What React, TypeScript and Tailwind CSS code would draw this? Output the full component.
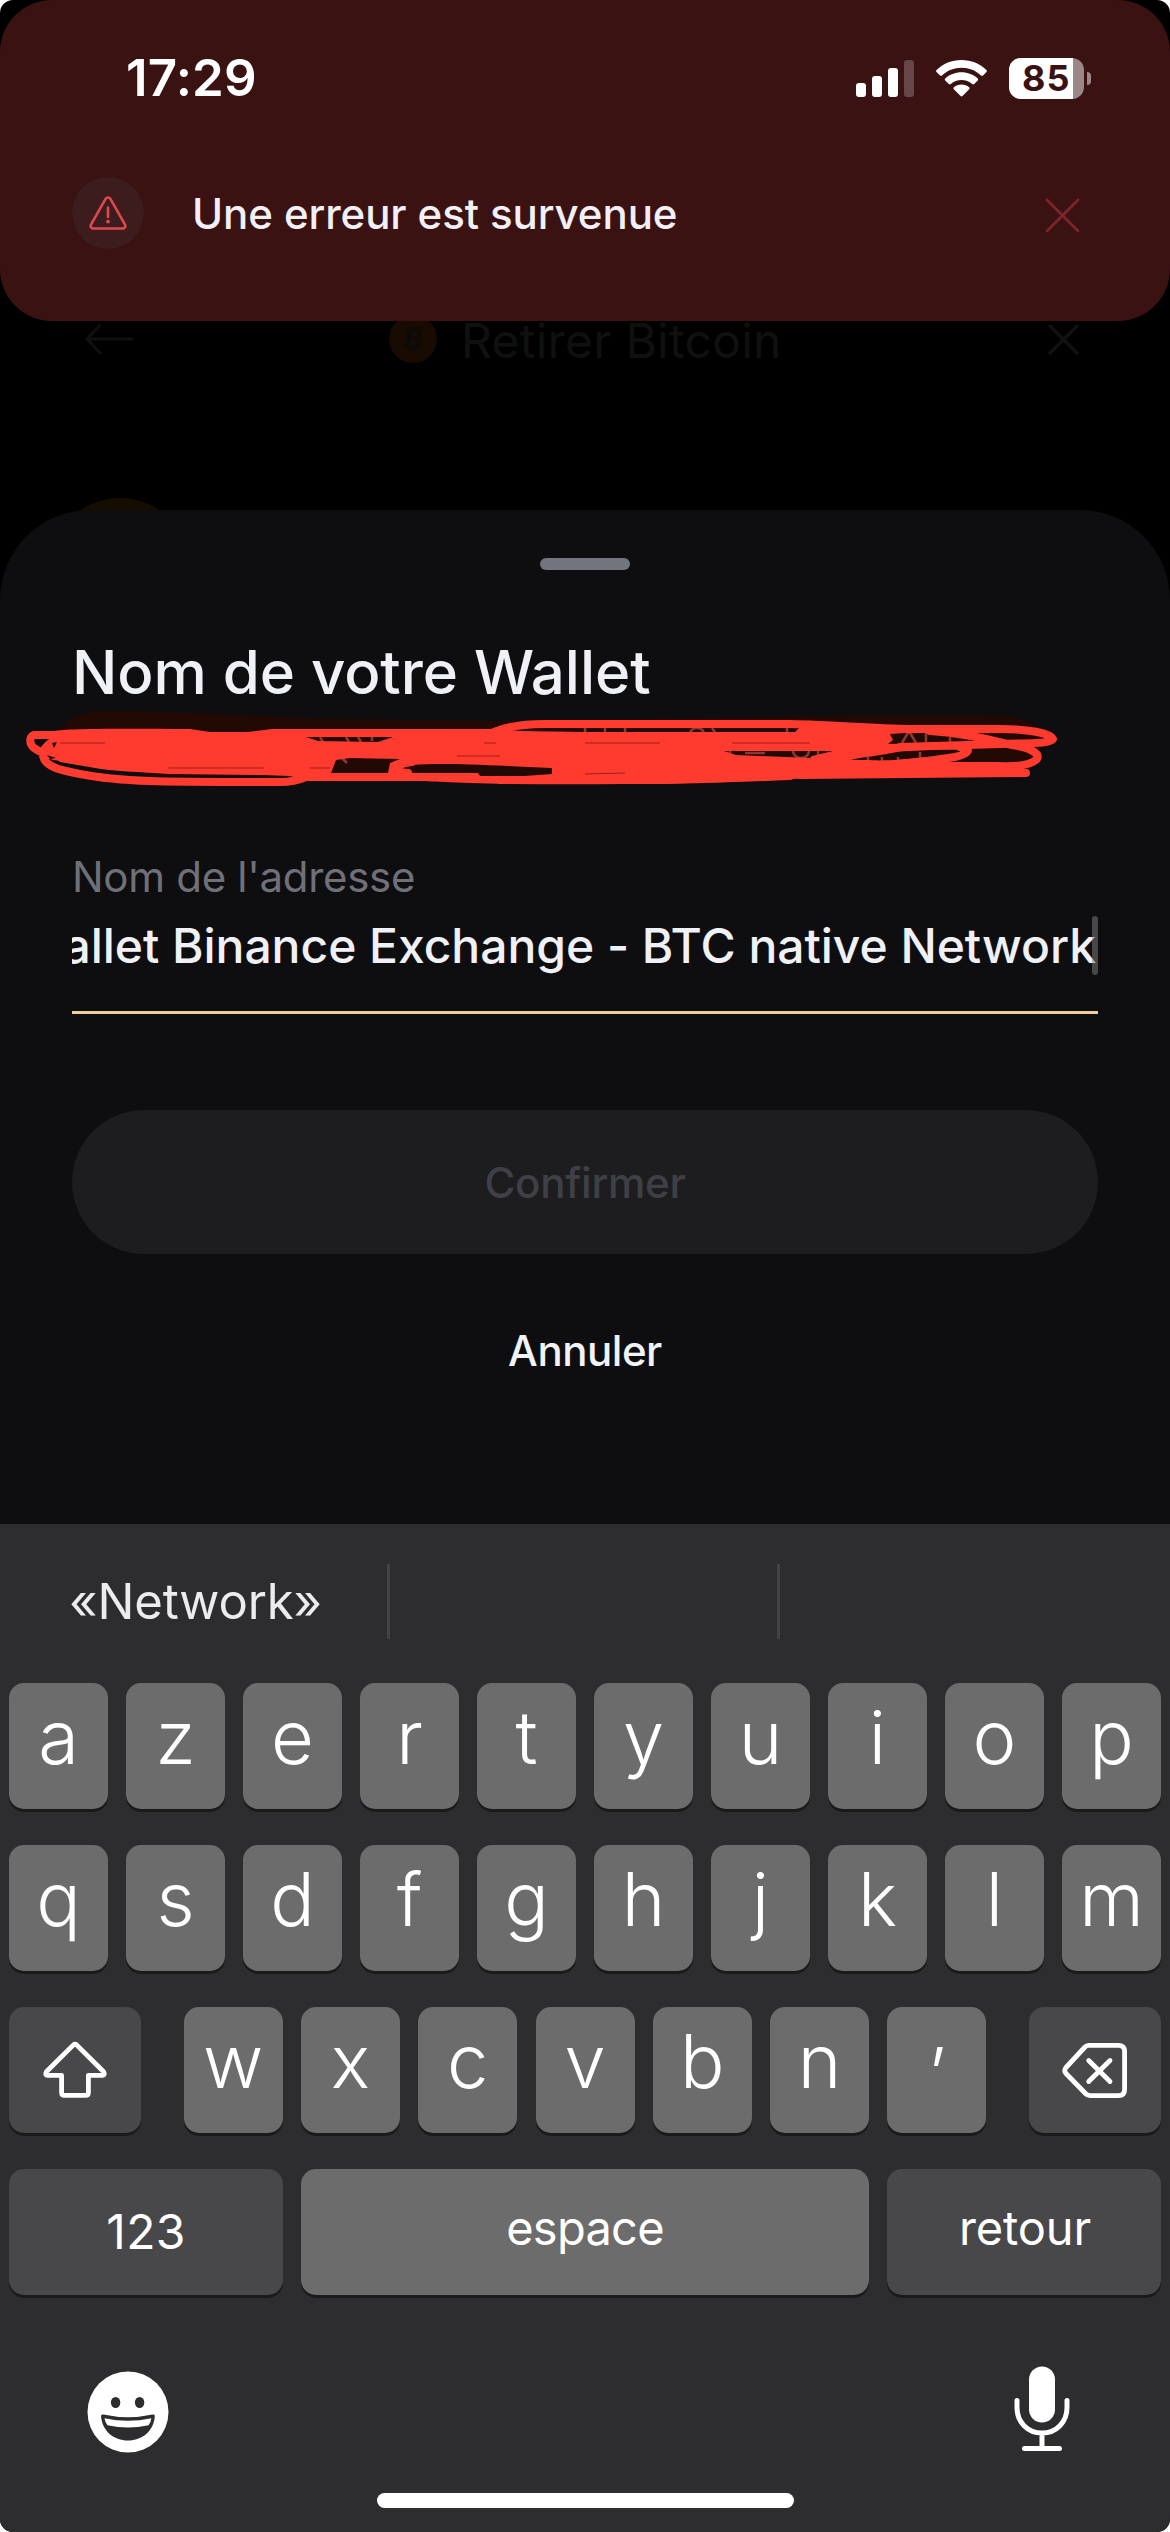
import React from "react";

function SignalIcon() {
  return (
    <svg width="58" height="37" viewBox="0 0 58 37" fill="#fff">
      <rect x="0" y="23" width="10" height="14" rx="3" />
      <rect x="16" y="16" width="10" height="21" rx="3" />
      <rect x="32" y="8" width="10" height="29" rx="3" />
      <rect x="48" y="0" width="10" height="37" rx="3" opacity="0.22" />
    </svg>
  );
}

function WifiIcon() {
  return (
    <svg width="51" height="37" viewBox="0 0 51 37" fill="#fff">
      <path d="M25.5 0C35.2 0 44 3.7 50.4 9.9c.6.6.6 1.4.1 2L47 15.4c-.6.6-1.4.6-2 0C39.8 10.500 33 7.700 25.500 7.700S11.200 10.500 6 15.400c-.6.6-1.400.6-2 0L.5 11.900c-.6-.6-.6-1.400.1-2C7 3.700 15.800 0 25.500 0Z" />
      <path d="M25.500 12.300c6.200 0 11.900 2.300 16.200 6.200.6.500.6 1.400.1 2l-3.600 3.500c-.5.6-1.400.6-2 .1-2.900-2.500-6.600-4-10.700-4s-7.800 1.500-10.700 4c-.6.5-1.400.5-2-.1L9.200 20.500c-.6-.6-.5-1.500.1-2 4.300-3.900 10-6.200 16.200-6.200Z" />
      <path d="M25.500 24.500c2.900 0 5.500 1 7.600 2.700.6.500.6 1.400.1 2l-6.700 6.900c-.6.600-1.400.6-2 0l-6.700-6.900c-.5-.6-.5-1.500.1-2 2.100-1.700 4.700-2.700 7.600-2.700Z" />
    </svg>
  );
}

function Battery() {
  return (
    <div className="flex items-center gap-[3px]">
      <div className="relative h-[41px] w-[75px] overflow-hidden rounded-[12px] bg-[#9b8788]">
        <div className="absolute inset-y-0 left-0 w-[64px] bg-white" />
        <div className="relative pl-[13px] text-[36px] font-bold leading-[41px] tracking-[1px] text-[#3b1212]">85</div>
      </div>
      <div className="h-[13px] w-[4px] rounded-r-full bg-[#9b8788]" />
    </div>
  );
}

function CrossIcon({ size, stroke, color }: { size: number; stroke: number; color: string }) {
  return (
    <svg width={size} height={size} viewBox={`0 0 ${size} ${size}`} fill="none" stroke={color} strokeWidth={stroke} strokeLinecap="round">
      <path d={`M2 2L${size - 2} ${size - 2}M${size - 2} 2L2 ${size - 2}`} />
    </svg>
  );
}

function ErrorBanner() {
  return (
    <div className="relative z-10 h-[321px] w-full rounded-[52px] bg-[#3b1212]">
      <div className="flex h-[156px] items-center justify-between pl-[126px] pr-[79px]">
        <div className="text-[51px] font-semibold leading-[60px] tracking-[0.2px] text-white">17:29</div>
        <div className="flex items-center">
          <SignalIcon />
          <div className="ml-[22px]">
            <WifiIcon />
          </div>
          <div className="ml-[22px]">
            <Battery />
          </div>
        </div>
      </div>
      <div className="flex h-[114px] items-center pl-[72px] pr-[90px]">
        <div className="flex size-[72px] items-center justify-center rounded-full bg-[#3c1c1c]">
          <svg width="38" height="34" viewBox="0 0 38 34" fill="none" stroke="#e0484f" strokeWidth="2.600" strokeLinecap="round" strokeLinejoin="round">
            <path d="M16.600 2.900a2.800 2.800 0 0 1 4.800 0L36 28.600a2.600 2.600 0 0 1-2.300 3.900H4.300A2.600 2.600 0 0 1 2 28.600Z" />
            <path d="M19 11.500v9.500" />
            <circle cx="19" cy="25.600" r="1.900" fill="#e0484f" stroke="none" />
          </svg>
        </div>
        <div className="ml-[48px] flex-1 pt-[2px] text-[42px] font-medium leading-[54px] tracking-[-0.08px] text-[#f1f0f6]">Une erreur est survenue</div>
        <div className="pt-[5px]">
          <CrossIcon size={35} stroke={2.8} color="#7d252b" />
        </div>
      </div>
    </div>
  );
}

function DimmedHeader() {
  return (
    <div className="-mt-[12px] flex h-[60px] items-center pl-[84px] pr-[91px]">
      <svg width="50" height="32" viewBox="0 0 50 32" fill="none" stroke="#0f1111" strokeWidth="3" strokeLinecap="round" strokeLinejoin="round">
        <path d="M48 16H3M16 2L3 16L16 30" />
      </svg>
      <div className="flex flex-1 items-center pl-[255px]">
        <div className="flex size-[48px] items-center justify-center rounded-full bg-[#170b02]">
          <span className="rotate-12 text-[28px] font-bold leading-none text-[#0d0a07]">₿</span>
        </div>
        <div className="ml-[24px] pt-[3px] text-[48px] leading-[56px] tracking-[0.26px] text-[#0f1111]">Retirer Bitcoin</div>
      </div>
      <CrossIcon size={31} stroke={3.4} color="#101212" />
    </div>
  );
}

function Scribble() {
  return (
    <svg className="block" width="1170" height="148" viewBox="0 702 1170 148" fill="none">
      <path d="M60 733C66 716 84 711 110 711C190 711 230 716 330 719L585 722C760 716 900 714 1008 716C1040 722 1050 732 1040 748L1020 768L500 778L150 776L62 750Z" fill="#230904" />
      <g stroke="#8a3a30" strokeWidth="2.500">
        <path d="M902 743L909 731L916 743M926 730V743M950 737V743M585 728V734M605 728V734M625 728V734M787 728V734M690 734a7 6 0 0 1 14 0M712 728l4 6M320 737l3 5M346 737l3 5M358 737l3 5M372 737v4M342 758l5 5M362 757h6M374 757h6M730 751V756M745 753h20M793 751a8 7 0 0 0 16 0M818 751v6M868 757v4M882 757v4M898 757v3M920 752v6" />
      </g>
      <path
        fill="#ff3b30"
        fillRule="evenodd"
        d="M55 731C75 728 140 729 190 729L210 732L248 732L272 729L500 729L520 731L585 732L700 732L795 732L802 725L850 726C880 727 898 730 905 733L890 734L893 740L888 744L960 742L985 742L965 748L968 753L925 762L985 764L960 773L790 779C740 781 700 784 640 784L520 784C450 783 430 781 415 781L308 781L290 776L262 775L170 774C140 772 110 771 95 768L60 762L44 750L52 744ZM306 737L318 741L378 742L393 737ZM336 760L331 773L388 773L390 763L400 759L350 758ZM398 769L412 765C440 763 470 764 552 768L552 774L524 776L480 776L478 773L404 773ZM724 751L734 751L833 751L812 756L810 758L736 755ZM851 760C860 757 880 756 897 752C920 750 945 749 960 750C963 753 955 755 930 757C900 760 880 761 870 760Z"
      />
      <g stroke="#ff3b30" strokeWidth="8" strokeLinecap="round" strokeLinejoin="round">
        <path d="M60 735H34C29 737 29 744 34 748C42 754 52 756 62 757M62 739C50 741 43 747 43 756C45 766 58 770 80 774C120 782 160 782 280 782C292 782 299 780 306 777" />
        <path d="M494 732C508 726 522 724 545 724L790 724C840 725 880 729 920 729L1000 729C1028 729 1050 733 1053 739C1050 744 1030 743 1000 744L900 747" />
        <path d="M930 731C965 733 990 740 1012 745C1030 748 1040 753 1037 759C1030 766 1015 767 998 766L930 766" />
        <path d="M960 747C972 748 970 754 955 757C930 761 900 764 880 766" />
        <path d="M800 775L1026 773M500 780C600 781 700 780 790 776" />
        <path d="M408 773C392 772 393 764 412 762" />
      </g>
      <path
        d="M52 743L57 742L54 748ZM47 755L56 758L50 759ZM34 740L41 741L38 744Z"
        fill="#160a0a"
      />
      <g stroke="#9c2018" strokeWidth="1">
        <path d="M60 743H105M168 768H264M310 768H330M585 743H660M732 743H810M484 743H496M457 756H500M585 774L625 773" />
      </g>
    </svg>
  );
}

function AddressSheet() {
  return (
    <div className="relative mt-[141px] flex h-[1014px] flex-col rounded-t-[90px] bg-[#0e0e10]">
      <div className="mx-auto mt-[48px] h-[12px] w-[90px] rounded-full bg-[#72747e]" />
      <div className="mt-[72px] pl-[72px] text-[60px] font-medium leading-[60px] tracking-[-0.05px] text-[#f0f1f6]">Nom de votre Wallet</div>
      <Scribble />
      <div className="px-[72px]">
        <div className="text-[42px] leading-[54px] tracking-[-0.3px] text-[#6f7078]">Nom de l'adresse</div>
        <div className="relative mt-[11px] h-[60px]">
          <div className="flex h-[60px] justify-end overflow-hidden whitespace-nowrap pr-[2px] text-[48px] font-medium leading-[62px] tracking-[-0.03px] text-[#f0f1f6]">
            <span>Wallet Binance Exchange - BTC native Network</span>
          </div>
          <div className="absolute right-0 top-[1px] h-[59px] w-[6px] rounded-full bg-[#7f7f82]/50" />
        </div>
        <div className="mt-[36px] h-[3px] bg-[#f0cd9d]" />
        <div className="mt-[96px] flex h-[144px] items-center justify-center rounded-full bg-[#1d1d1f] text-[42px] font-medium tracking-[-0.23px] text-[#3f4047]">
          Confirmer
        </div>
        <div className="mt-[67px] text-center text-[42px] font-medium leading-[60px] tracking-[-0.47px] text-[#f2f3f7]">Annuler</div>
      </div>
    </div>
  );
}

function LetterKey({ label }: { label: string }) {
  return (
    <div className="flex h-[126px] w-[99px] items-center justify-center rounded-[15px] bg-[#6c6c6c] pb-[18px] text-[74px] font-[330] leading-none text-white shadow-[0_3px_0_#1a1a1b]">
      {label === "’" ? <span className="pt-[26px]">{label}</span> : label}
    </div>
  );
}

function KeyRow({ letters }: { letters: string }) {
  return (
    <div className="flex justify-between">
      {letters.split("").map((l) => (
        <LetterKey key={l} label={l} />
      ))}
    </div>
  );
}

function Keyboard() {
  return (
    <div className="flex flex-1 flex-col bg-[#2d2d2f]">
      <div className="flex h-[159px] items-center pb-[4px]">
        <div className="w-[387px] pl-[4px] text-center text-[49px] leading-[60px] tracking-[-0.1px] text-[#ececee]">«Network»</div>
        <div className="h-[75px] w-[3px] bg-[#434345]" />
        <div className="w-[387px]" />
        <div className="h-[75px] w-[3px] bg-[#434345]" />
      </div>
      <div className="flex flex-col gap-[36px] px-[9px]">
        <KeyRow letters="azertyuiop" />
        <KeyRow letters="qsdfghjklm" />
        <div className="flex justify-between">
          <div className="flex h-[126px] w-[132px] items-center justify-center rounded-[15px] bg-[#48484a] shadow-[0_3px_0_#1a1a1b]">
            <svg width="66" height="58" viewBox="0 0 66 58" fill="none" stroke="#fff" strokeWidth="4.800" strokeLinejoin="round">
              <path d="M31.200 4.100Q33 2.600 34.800 4.100L61.400 30.500Q63.500 34 60.500 34.400H46.400V51.500Q46.400 54.400 43.500 54.400H22.500Q19.600 54.400 19.600 51.500V34.400H5.500Q2.500 34 4.600 30.500Z" />
            </svg>
          </div>
          <div className="flex gap-[18.300px]">
            {"wxcvbn’".split("").map((l) => (
              <LetterKey key={l} label={l} />
            ))}
          </div>
          <div className="flex h-[126px] w-[132px] items-center justify-center rounded-[15px] bg-[#48484a] shadow-[0_3px_0_#1a1a1b]">
            <svg width="66" height="55" viewBox="0 0 66 55" fill="none" stroke="#fff" strokeWidth="4.800" strokeLinecap="round" strokeLinejoin="round">
              <path d="M26.500 2.400H56.500Q62.600 2.400 62.600 8.500V46.500Q62.600 52.600 56.500 52.600H28Q25.500 52.600 23.500 50.500L4 30.500Q1.500 27.500 4 24.500L22.500 4.500Q24.500 2.400 26.500 2.400Z" />
              <path d="M26.700 17.500L48 38.500M48 17.500L26.700 38.500" />
            </svg>
          </div>
        </div>
        <div className="flex gap-[18px] text-white">
          <div className="flex h-[126px] w-[274px] items-center justify-center rounded-[15px] bg-[#48484a] text-[48px] tracking-[0.3px] shadow-[0_3px_0_#1a1a1b]">123</div>
          <div className="flex h-[126px] flex-1 items-center justify-center rounded-[15px] bg-[#6c6c6c] pb-[8px] text-[47px] tracking-[-0.74px] shadow-[0_3px_0_#1a1a1b]">espace</div>
          <div className="flex h-[126px] w-[274px] items-center justify-center rounded-[15px] bg-[#48484a] pb-[8px] pl-[2px] text-[47px] tracking-[-0.14px] shadow-[0_3px_0_#1a1a1b]">retour</div>
        </div>
      </div>
      <div className="mt-[70px] flex items-start justify-between pl-[87px] pr-[99px]">
        <svg className="mt-[6px]" width="82" height="82" viewBox="0 0 82 82">
          <circle cx="41" cy="41" r="40.500" fill="#fff" />
          <ellipse cx="28.600" cy="31.500" rx="4.700" ry="5.500" fill="#2d2d2f" />
          <ellipse cx="52.600" cy="31.500" rx="4.700" ry="5.500" fill="#2d2d2f" />
          <path d="M14 45Q14 43 16.500 43.600Q41 49 65.500 43.600Q68 43 67.800 45C67 60 55 69.500 41 69.500S15 60 14 45Z" fill="#2d2d2f" />
          <path d="M17.500 47.200Q41 52.200 64.300 47.200Q64 51.500 61.500 54.200Q41 59 20.500 54.200Q18 51.500 17.500 47.200Z" fill="#fff" />
        </svg>
        <svg className="mt-[1px]" width="58" height="86" viewBox="0 0 58 86" fill="none" stroke="#fff" strokeWidth="5" strokeLinecap="round">
          <rect x="16" y="0.500" width="26" height="56" rx="13" fill="#fff" stroke="none" />
          <path d="M4 34.500V41.500C4 56 14.500 67 29 67S54 56 54 41.500V34.500M29 67V82M11.500 82.500H46.500" />
        </svg>
      </div>
      <div className="mx-auto mt-[40px] h-[15px] w-[417px] rounded-full bg-white" />
    </div>
  );
}

export default function App() {
  return (
    <div className="h-[2532px] w-[1170px] bg-white font-['Inter',sans-serif]">
      <div className="relative flex h-full w-full flex-col overflow-hidden rounded-[13px] bg-black">
        <div className="absolute left-[48px] top-[498px] size-[144px] rounded-full bg-[#150c02]" />
        <ErrorBanner />
        <DimmedHeader />
        <AddressSheet />
        <Keyboard />
      </div>
    </div>
  );
}
